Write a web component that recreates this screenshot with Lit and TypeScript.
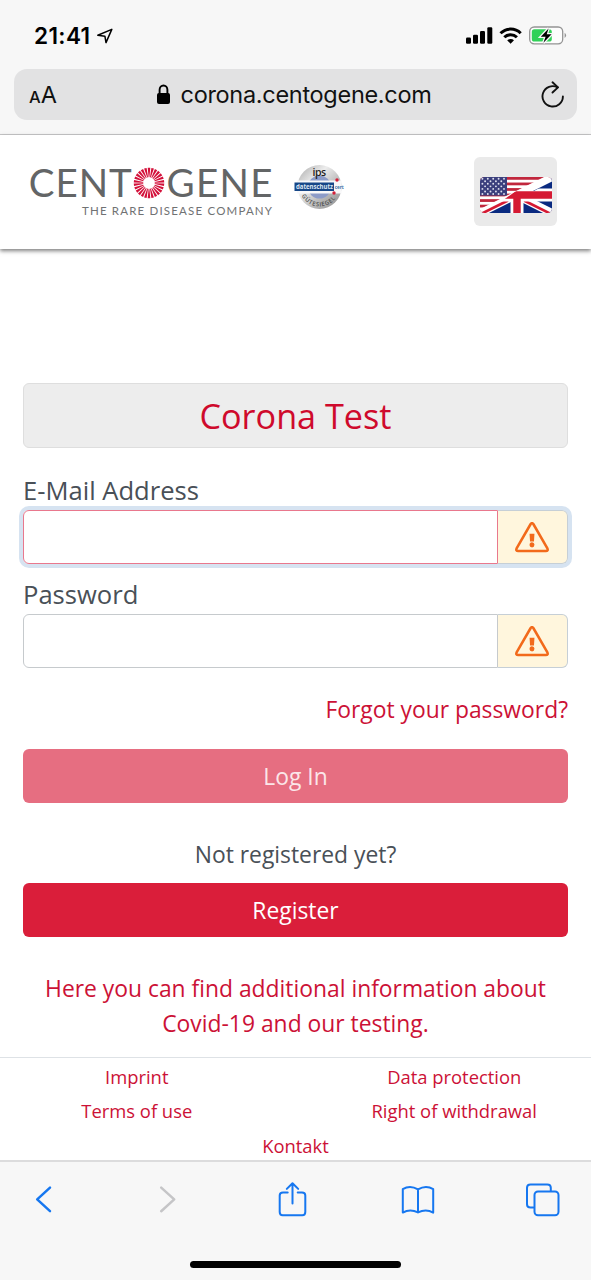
import { LitElement, html, svg, css } from "lit";
import { customElement, property } from "lit/decorators.js";

const stars = Array.from({ length: 7 }, (_, r) =>
  Array.from({ length: r % 2 ? 4 : 5 }, (_, c) => ({
    x: 2.4 + c * 5.4 + (r % 2 ? 2.7 : 0),
    y: 2.7 + r * 2.55,
  })),
).flat();

const rays = Array.from({ length: 26 }, (_, i) => (i * 360) / 26);

@customElement("status-bar")
class StatusBar extends LitElement {
  static styles = css`
    :host { display: flex; justify-content: space-between; height: 69px; box-sizing: border-box; padding: 23px 24px 0 34px; font-family: Inter, "Liberation Sans", sans-serif; }
    .left, .right { display: flex; height: 25px; align-items: center; }
    .clock { font-size: 22.6px; font-weight: 600; letter-spacing: 0.35px; width: 62px; line-height: 25px; white-space: nowrap; color: #000; }
    svg { display: block; }
  `;
  render() {
    return html`
      <div class="left">
        <span class="clock">21:41</span>
        <svg width="18" height="18" viewBox="0 0 18 18">
          <path d="M1.8 8.3 15.8 2.4 10 15.6 8.9 9.2Z" fill="none" stroke="#000" stroke-width="1.5" stroke-linejoin="round" />
        </svg>
      </div>
      <div class="right">
        <svg width="102" height="25" viewBox="465 23 102 25">
          <rect x="466" y="37.5" width="5" height="6.3" rx="1.2" />
          <rect x="473" y="34.8" width="5" height="9" rx="1.2" />
          <rect x="480" y="31" width="5" height="12.8" rx="1.2" />
          <rect x="487.3" y="27.3" width="5" height="16.5" rx="1.2" />
          <g fill="none" stroke="#000" stroke-width="3">
            <path d="M500.5 33.3a14.3 14.3 0 0 1 20.2 0" />
            <path d="M504.3 37.3a8.9 8.9 0 0 1 12.6 0" />
          </g>
          <path d="M507.2 40.3a4.9 4.9 0 0 1 6.8 0l-3.4 3.5z" />
          <rect x="529.7" y="27" width="33" height="16.8" rx="4.5" fill="#fdfdfd" stroke="#949494" stroke-width="1.3" />
          <path d="M564.6 32.8q3 2.6 0 5.2z" fill="#949494" />
          <rect x="531.8" y="29.2" width="20" height="12.4" rx="2.6" fill="#30d158" />
          <path d="M548.6 28.4 540.8 36.8h4.8l-2.2 6 8.2-8.6h-4.9z" fill="#000" stroke="#f8f8f8" stroke-width="2.6" paint-order="stroke" />
        </svg>
      </div>
    `;
  }
}

@customElement("address-bar")
class AddressBar extends LitElement {
  static styles = css`
    :host { display: flex; align-items: center; justify-content: space-between; height: 51px; margin: 0 14px; padding: 0 12px 0 15px; box-sizing: border-box; border-radius: 13px; background: #e2e2e3; font-family: Inter, "Liberation Sans", sans-serif; color: #111; }
    .sizes { display: flex; align-items: baseline; width: 127px; line-height: 30px; padding-top: 2px; }
    .small { font-size: 16.5px; font-weight: 500; }
    .large { font-size: 23.5px; }
    .site { display: flex; align-items: center; flex: 1; }
    .url { font-size: 23.5px; line-height: 50px; margin-left: 9.5px; letter-spacing: -0.3px; white-space: nowrap; }
    svg { display: block; }
  `;
  render() {
    return html`
      <span class="sizes"><span class="small">A</span><span class="large">A</span></span>
      <span class="site">
        <svg width="15" height="21" viewBox="0 0 15 21">
          <rect x="1" y="9" width="13" height="11" rx="2" />
          <path d="M3.6 10V5.8a3.9 4.3 0 0 1 7.8 0V10" fill="none" stroke="#000" stroke-width="1.9" />
        </svg>
        <span class="url">corona.centogene.com</span>
      </span>
      <svg width="24" height="30" viewBox="541 80 24 30">
        <path d="M557.6 87.4A10.2 10.2 0 1 0 562.9 96.4" fill="none" stroke="#111" stroke-width="1.9" stroke-linecap="round" />
        <path d="M552.5 82.3 558 87.4 552.5 92.5" fill="none" stroke="#111" stroke-width="1.9" stroke-linecap="round" stroke-linejoin="round" />
      </svg>
    `;
  }
}

@customElement("brand-header")
class BrandHeader extends LitElement {
  static styles = css`
    :host { display: flex; height: 114px; box-sizing: border-box; background: #fff; padding: 22px 34px 0 29px; box-shadow: 0 2px 4px rgba(0, 0, 0, 0.5); justify-content: space-between; font-family: Lato, sans-serif; }
    .brand { display: flex; gap: 20px; padding-top: 1px; }
    .lang { width: 83px; height: 69px; border-radius: 6px; background: #eaeaea; display: flex; align-items: center; justify-content: center; padding-top: 7px; box-sizing: border-box; }
    svg { display: block; }
    .logo { font-size: 38.5px; fill: #636566; }
    .tag { font-size: 11.5px; fill: #707273; }
    .seal { font-family: "Open Sans", sans-serif; }
  `;
  render() {
    return html`
      <div class="brand">
        <svg width="245" height="68" viewBox="29 158 245 68">
          <g class="logo">
            <text x="28.8" y="197" textLength="103" lengthAdjust="spacing">CENT</text>
            <text x="166.5" y="197" textLength="106" lengthAdjust="spacing">GENE</text>
          </g>
          <g fill="#d3103a">
            ${rays.map((a) => svg`<path d="M-1.3 -15.2H1.3L.4 -5.8H-.4z" transform="translate(149 183) rotate(${a})" />`)}
          </g>
          <text class="tag" x="82" y="215" textLength="190" lengthAdjust="spacing">THE RARE DISEASE COMPANY</text>
        </svg>
        <svg class="seal" width="52" height="58" viewBox="294 162 52 58">
          <defs>
            <linearGradient id="metal" x1="0" y1="0" x2="1" y2="1">
              <stop offset="0" stop-color="#a5a5a5" />
              <stop offset=".35" stop-color="#ededed" />
              <stop offset=".65" stop-color="#b9b9b9" />
              <stop offset="1" stop-color="#8d8d8d" />
            </linearGradient>
            <path id="arc" d="M300.8 198 A20.3 20.3 0 0 0 338.2 198" />
          </defs>
          <circle cx="319.5" cy="191" r="22" fill="url(#metal)" />
          <circle cx="319.5" cy="191" r="11.5" fill="#8d9cc8" />
          <path d="M297 184.5h44.5v13H297z" fill="#f8f8f9" />
          <rect x="294.5" y="186.5" width="39.5" height="8.5" fill="#174787" />
          <text x="296" y="193.2" font-size="7" font-weight="700" fill="#dfe8f3" textLength="37" lengthAdjust="spacingAndGlyphs">datenschutz</text>
          <text x="334.8" y="192.6" font-size="6" font-weight="700" fill="#3672a8" textLength="9" lengthAdjust="spacingAndGlyphs">cert</text>
          <text x="312.5" y="179.5" font-size="10.5" font-weight="600" fill="#222" textLength="13.5">ips</text>
          <circle cx="337" cy="184" r="1.7" fill="#d3203a" />
          <circle cx="334" cy="197" r="1.7" fill="#d3203a" />
          <text font-size="5.8" font-weight="600" fill="#4c4c4c"><textPath href="#arc" startOffset="2" textLength="40">GÜTESIEGEL</textPath></text>
        </svg>
      </div>
      <div class="lang">
        <svg width="72" height="38" viewBox="0 0 72 38">
          <defs>
            <clipPath id="frame"><rect y="1" width="72" height="36" rx="4.5" /></clipPath>
            <clipPath id="british"><path d="M72 -3V38H-10z" /></clipPath>
            <clipPath id="cross"><path d="M72 5V38H0L24 23.6 36 15H54z" /></clipPath>
          </defs>
          <g clip-path="url(#frame)">
            <rect width="72" height="38" fill="#fff" />
            ${[0, 1, 2, 3, 4, 5, 6].map((i) => svg`<rect y=${1 + i * 5.54} width="72" height="2.77" fill="#c1273d" />`)}
            <rect y="1" width="27" height="18.6" fill="#3b3f7d" />
            ${stars.map((s) => svg`<circle cx=${s.x} cy=${s.y} r=".95" fill="#dfe0ee" />`)}
            <g clip-path="url(#british)">
              <path d="M0 37 72 1V37z" fill="#0a2a80" />
              <path d="M0 37 72 1M36 19 72 37" stroke="#fff" stroke-width="8" />
              <path d="M2 37.5 28 24.5M44 24.5 72 38.5" stroke="#d51a33" stroke-width="2.6" />
              <g clip-path="url(#cross)">
                <path d="M37 14V38M20 19H72" stroke="#fff" stroke-width="13" />
                <path d="M37 16V38M24 19H72" stroke="#d51a33" stroke-width="7.4" />
              </g>
            </g>
          </g>
        </svg>
      </div>
    `;
  }
}

@customElement("form-field")
class FormField extends LitElement {
  @property() label = "";
  @property({ type: Boolean, reflect: true }) active = false;
  static styles = css`
    :host { display: block; height: 104.4px; }
    .label { display: block; height: 37px; line-height: 36px; font-size: 25.6px; color: #495057; white-space: nowrap; }
    .group { display: flex; height: 54px; border-radius: 6px; }
    .input { flex: 1; box-sizing: border-box; min-width: 0; border: 1.4px solid #c6cacd; border-radius: 6px 0 0 6px; background: #fff; padding: 0 16px; font: inherit; outline: none; }
    .addon { width: 70px; box-sizing: border-box; border: 1px solid #c6cfd6; border-left: 0; border-radius: 0 6px 6px 0; background: #fff6dd; display: flex; align-items: center; justify-content: center; }
    :host([active]) .group { box-shadow: 0 0 0 4px #d6e3f1; }
    :host([active]) .input { border: 1.4px solid #e9788d; }
    .warn { margin-right: 1px; }
  `;
  render() {
    return html`
      <label class="label">${this.label}</label>
      <div class="group">
        <input class="input" aria-label=${this.label} />
        <span class="addon">
          <svg class="warn" width="34" height="31" viewBox="0 0 36 32" preserveAspectRatio="none">
            <path d="M16.6 2.1 1.7 27.3Q0.6 30 3.3 30H32.7Q35.4 30 34.3 27.3L19.4 2.1Q18 0.3 16.6 2.1Z" fill="none" stroke="#f26a1b" stroke-width="2.7" stroke-linejoin="round" />
            <path d="M15.4 12.1h5.2l-.5 8h-4.2z" fill="#f26a1b" />
            <circle cx="18" cy="23.6" r="2.6" fill="#f26a1b" />
          </svg>
        </span>
      </div>
    `;
  }
}

@customElement("safari-toolbar")
class SafariToolbar extends LitElement {
  static styles = css`
    :host { display: flex; flex-direction: column; align-items: center; height: 120px; box-sizing: border-box; border-top: 2px solid #dcdcdd; background: #f7f7f7; }
    .icons { display: flex; width: 100%; height: 76px; padding: 0 28.5px 0 23.5px; box-sizing: border-box; justify-content: space-between; align-items: center; }
    .icon { display: block; width: 40px; height: 40px; fill: none; stroke: #1677f0; stroke-width: 2; stroke-linecap: round; stroke-linejoin: round; }
    .chevron { stroke-width: 2.5; }
    .off { stroke: #c5c5c7; }
    .home { width: 211px; height: 7px; border-radius: 4px; background: #000; margin-top: 23px; }
  `;
  render() {
    return html`
      <div class="icons">
        <svg class="icon chevron" viewBox="0 0 40 40"><path d="M26 7.6 13.2 19.4 26 31.2" /></svg>
        <svg class="icon chevron off" viewBox="0 0 40 40"><path d="M13.2 7.6 26.2 19.4 13.2 31.2" /></svg>
        <svg class="icon" viewBox="0 0 40 40"><path d="M14.7 12.4H10Q6.7 12.4 6.7 15.4V32Q6.7 35.2 9.7 35.2H29.3Q32.3 35.2 32.3 32V15.4Q32.3 12.4 29 12.4H24.7M19.5 23.4V3.6M13.8 8.9 19.5 3.2 25.2 8.9" /></svg>
        <svg class="icon" viewBox="0 0 40 40"><path d="M20 9.4Q12 4.6 4.8 9.2V32.6Q12 28.4 20 32.4Q28 28.4 35.2 32.6V9.2Q28 4.6 20 9.4V32.4" /></svg>
        <svg class="icon" viewBox="0 0 40 40"><path d="M10.5 27.6H7.5Q4 27.6 4 24.2V7.8Q4 4.4 7.5 4.4H24.3Q27.8 4.4 27.8 7.8V11" /><rect x="11.5" y="11.4" width="24" height="23.8" rx="3.5" /></svg>
      </div>
      <div class="home"></div>
    `;
  }
}

@customElement("app-root")
class AppRoot extends LitElement {
  static styles = css`
    :host { display: flex; flex-direction: column; width: 591px; height: 1280px; overflow: hidden; background: #fff; font-family: "Open Sans", sans-serif; color: #495057; }
    .chrome { height: 135px; box-sizing: border-box; flex: none; background: #f7f7f7; border-bottom: 1.4px solid #c9c9ca; }
    .page { height: 808px; flex: none; box-sizing: border-box; padding: 134px 23px 0; display: flex; flex-direction: column; }
    .title { height: 65px; flex: none; box-sizing: border-box; margin: 0 0 25px; border: 1.4px solid #dedede; border-radius: 6px; background: #ededed; font-size: 34.2px; font-weight: 400; line-height: 63px; text-align: center; color: #cf0a2c; }
    .forgot { align-self: flex-end; height: 34px; line-height: 35px; font-size: 22.85px; margin-top: 10.5px; margin-bottom: 22.7px; }
    .link { color: #cc1136; text-decoration: none; white-space: nowrap; }
    .button { height: 54px; flex: none; border: 0; border-radius: 6px; background: #da1e3a; color: #fff; font: 400 22.85px/54px "Open Sans", sans-serif; padding: 1px 0 0; }
    .disabled { background: #e66e81; color: #fbe6e9; }
    .hint { margin: 35px 0 11px; height: 34px; line-height: 34px; font-size: 22.85px; text-align: center; }
    .info { margin: 35.5px 0 0; font-size: 22.85px; line-height: 34.4px; text-align: center; }
    .footer { flex: 1; display: grid; grid-template-columns: 1fr 1fr; grid-auto-rows: 34.3px; border-top: 1.4px solid #dee2e6; padding: 2px 0 0; font-size: 18.4px; line-height: 34.3px; text-align: center; box-sizing: border-box; min-height: 0; }
    .left { padding-right: 22px; }
    .right { padding-left: 22px; }
    .wide { grid-column: 1 / 3; }
  `;
  render() {
    return html`
      <div class="chrome"><status-bar></status-bar><address-bar></address-bar></div>
      <brand-header></brand-header>
      <main class="page">
        <h1 class="title">Corona Test</h1>
        <form-field label="E-Mail Address" active></form-field>
        <form-field label="Password"></form-field>
        <a class="link forgot">Forgot your password?</a>
        <button class="button disabled">Log In</button>
        <p class="hint">Not registered yet?</p>
        <button class="button">Register</button>
        <p class="info"><a class="link">Here you can find additional information about<br />Covid-19 and our testing.</a></p>
      </main>
      <footer class="footer">
        <a class="link left">Imprint</a>
        <a class="link right">Data protection</a>
        <a class="link left">Terms of use</a>
        <a class="link right">Right of withdrawal</a>
        <a class="link wide">Kontakt</a>
      </footer>
      <safari-toolbar></safari-toolbar>
    `;
  }
}
